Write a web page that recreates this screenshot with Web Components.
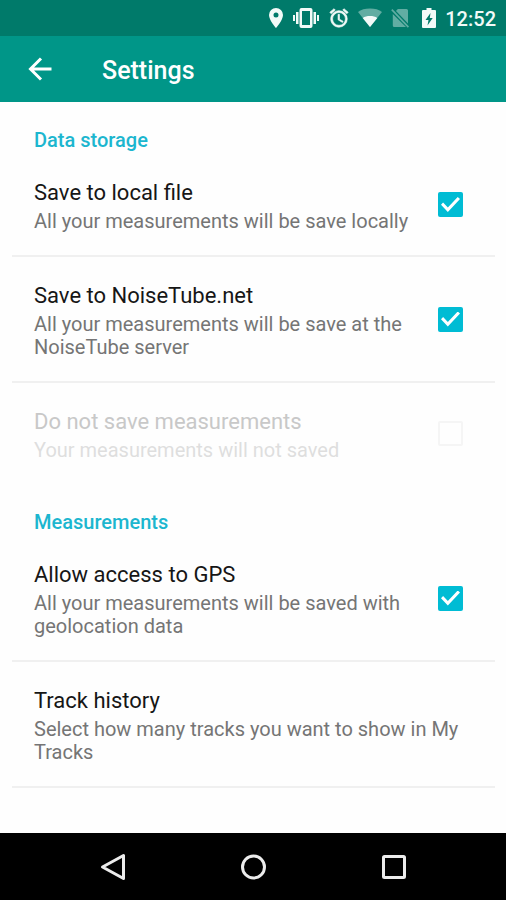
<!DOCTYPE html>
<html lang="en">
<head>
<meta charset="utf-8">
<meta name="viewport" content="width=device-width, initial-scale=1">
<title>Settings</title>
<style>
  body { margin: 0; background: #fefefe; font-family: Roboto, "Liberation Sans", sans-serif; }
</style>
</head>
<body>
<settings-app></settings-app>

<template id="status-bar">
  <style>
    :host { display: flex; align-items: center; justify-content: flex-end; height: 36px; padding-right: 10px; background: #007a6a; color: #f2faf8; }
    .icons { display: flex; align-items: center; gap: 8px; margin-right: 5px; }
    svg { display: block; fill: currentColor; }
    time { font-size: 20px; line-height: 24px; font-weight: 500; padding-top: 2px; }
  </style>
  <div class="icons">
    <svg width="16" height="22" viewBox="0 0 16 22" role="img" aria-label="Location"><path fill-rule="evenodd" d="M8 1a7 7 0 0 0-7 7c0 5.200 7 13 7 13s7-7.800 7-13a7 7 0 0 0-7-7zm0 4.600a2.500 2.500 0 1 1 0 5 2.500 2.500 0 0 1 0-5z"/></svg>
    <svg width="28" height="22" viewBox="0 0 28 22" role="img" aria-label="Vibrate"><path fill-rule="evenodd" d="M9.500 1h9a2 2 0 0 1 2 2v16a2 2 0 0 1-2 2h-9a2 2 0 0 1-2-2V3a2 2 0 0 1 2-2zm.5 3v14h8V4zM4 5h2.500v12H4zM1 8h2v6H1zM21.500 5H24v12h-2.500zM25 8h2v6h-2z"/></svg>
    <svg width="22" height="22" viewBox="0 0 24 24" role="img" aria-label="Alarm"><path d="M22 5.720l-4.600-3.860-1.290 1.530 4.600 3.860L22 5.720zM7.880 3.390L6.600 1.860 2 5.710l1.290 1.530 4.590-3.850zM12.500 8H11v6l4.750 2.850.75-1.230-4-2.370V8zM12 4c-4.970 0-9 4.030-9 9s4.020 9 9 9a9 9 0 0 0 0-18zm0 16a7 7 0 1 1 0-14 7 7 0 0 1 0 14z" stroke="currentColor" stroke-width=".7"/></svg>
    <svg width="24" height="22" viewBox="0 0 24 22" role="img" aria-label="Wi-Fi"><path opacity=".4" d="M12 20L0 5C3 2.500 7 1.500 12 1.500S21 2.500 24 5z"/><path d="M12 20L4.700 10.900C6.700 9.600 9.200 9 12 9s5.300.6 7.300 1.900z"/></svg>
    <svg width="20" height="22" viewBox="0 0 20 22" role="img" aria-label="No SIM"><g opacity=".4"><path d="M7.800 2H16.500q1.500 0 1.500 1.500v13L6 4z"/><path d="M2.800 7L16 20H4.300q-1.500 0-1.500-1.500z"/><path d="M1.200 3.200l1.200-1.200L19 19.500l-1.200 1.200z"/></g></svg>
    <svg width="22" height="22" viewBox="0 0 22 22" role="img" aria-label="Battery charging"><path fill-rule="evenodd" d="M8.500 1h5v2H17q1 0 1 1v16q0 1-1 1H5q-1 0-1-1V4q0-1 1-1h3.500zM12.500 6L7.500 13H10.500L9.500 18.500 14.700 11H11.800z"/></svg>
  </div>
  <time datetime="12:52">12:52</time>
</template>

<template id="app-bar">
  <style>
    :host { display: flex; align-items: center; gap: 47px; height: 66px; padding-left: 25px; background: #009688; color: #fff; }
    button { display: block; width: 30px; height: 30px; padding: 0; border: 0; background: none; color: inherit; }
    svg { display: block; }
    h1 { margin: 0; font-size: 25px; line-height: 30px; font-weight: 500; padding-top: 4px; }
  </style>
  <button type="button" aria-label="Back"><svg width="30" height="30" viewBox="0 0 30 30" fill="none" stroke="currentColor" stroke-width="3"><path d="M26.500 15H6M16 4.500L5.500 15 16 25.500"/></svg></button>
  <h1><slot></slot></h1>
</template>

<template id="settings-section">
  <style>
    :host { display: block; }
    h2 { margin: 0; padding: 26px 22px 2px; font-size: 20px; line-height: 24px; font-weight: 500; color: #1cb6cf; }
  </style>
  <h2><slot name="heading"></slot></h2>
  <slot></slot>
</template>

<template id="setting-item">
  <style>
    :host { display: block; border-bottom: 2px solid #f0f0f0; }
    :host([plain]) { border-bottom: 0; }
    .row { box-sizing: border-box; display: flex; align-items: center; gap: 20px; width: 100%; padding: 22px 32px 22px 22px; margin: 0; border: 0; background: none; font: inherit; text-align: left; }
    .text { flex: 1; min-width: 0; display: flex; flex-direction: column; gap: 2px; padding-top: 2px; }
    .title { font-size: 22px; line-height: 30px; color: #161616; }
    .summary { font-size: 20px; line-height: 23px; color: #757575; }
    input { appearance: none; flex: none; display: grid; place-items: center; box-sizing: border-box; width: 25px; height: 25px; margin: 0; border: 2px solid #757575; border-radius: 2px; }
    input:checked { border: 0; background: #00bcd4; }
    input:checked::before { content: ""; width: 19px; height: 15px; background: #fff; clip-path: polygon(0 51%, 11% 37%, 36% 70%, 88% 0, 100% 13%, 36% 100%); }
    :host([disabled]) .title { color: #c8c8c8; }
    :host([disabled]) .summary { color: #dedede; }
    input:disabled { border-color: #f5f5f5; }
  </style>
</template>

<template id="nav-bar">
  <style>
    :host { display: grid; grid-template-columns: repeat(3, 1fr); height: 67px; padding: 0 43px; background: #000; color: #ececec; }
    button { display: grid; place-items: center; padding: 0; border: 0; background: none; color: inherit; }
    svg { display: block; fill: none; stroke: currentColor; stroke-width: 3; stroke-linejoin: round; }
  </style>
  <button type="button" aria-label="Back"><svg width="28" height="28" viewBox="0 0 28 28"><path d="M24.500 2.500v23L3.500 14z"/></svg></button>
  <button type="button" aria-label="Home"><svg width="28" height="28" viewBox="0 0 28 28"><circle cx="14.500" cy="14" r="11"/></svg></button>
  <button type="button" aria-label="Overview"><svg width="28" height="28" viewBox="0 0 28 28"><rect x="4.500" y="3.500" width="21" height="21" rx="1"/></svg></button>
</template>

<template id="settings-app">
  <style>
    :host { display: flex; flex-direction: column; min-height: 100vh; }
    main { flex: 1; padding: 0 11px 0 12px; }
  </style>
  <status-bar></status-bar>
  <app-bar>Settings</app-bar>
  <main>
    <settings-section>
      <span slot="heading">Data storage</span>
      <setting-item type="checkbox" checked><span slot="title">Save to local file</span><span slot="summary">All your measurements will be save locally</span></setting-item>
      <setting-item type="checkbox" checked><span slot="title">Save to NoiseTube.net</span><span slot="summary">All your measurements will be save at the NoiseTube server</span></setting-item>
      <setting-item type="checkbox" disabled plain><span slot="title">Do not save measurements</span><span slot="summary">Your measurements will not saved</span></setting-item>
    </settings-section>
    <settings-section>
      <span slot="heading">Measurements</span>
      <setting-item type="checkbox" checked><span slot="title">Allow access to GPS</span><span slot="summary">All your measurements will be saved with geolocation data</span></setting-item>
      <setting-item><span slot="title">Track history</span><span slot="summary">Select how many tracks you want to show in My Tracks</span></setting-item>
    </settings-section>
  </main>
  <nav-bar></nav-bar>
</template>

<script>
  class TemplateElement extends HTMLElement {
    constructor() {
      super();
      const template = document.getElementById(this.localName);
      this.attachShadow({ mode: "open" }).append(template.content.cloneNode(true));
    }
  }

  // A row is a labelled checkbox, or a button when it opens a further choice.
  class SettingItem extends HTMLElement {
    connectedCallback() {
      if (this.shadowRoot) return;
      const root = this.attachShadow({ mode: "open" });
      root.append(document.getElementById("setting-item").content.cloneNode(true));
      const isCheckbox = this.getAttribute("type") === "checkbox";
      const row = document.createElement(isCheckbox ? "label" : "button");
      row.className = "row";
      row.innerHTML = '<span class="text"><span class="title"><slot name="title"></slot></span><span class="summary"><slot name="summary"></slot></span></span>';
      if (isCheckbox) {
        const input = document.createElement("input");
        input.type = "checkbox";
        input.id = "toggle";
        input.checked = this.hasAttribute("checked");
        input.disabled = this.hasAttribute("disabled");
        row.htmlFor = "toggle";
        row.append(input);
      } else {
        row.type = "button";
      }
      root.append(row);
    }
  }

  customElements.define("status-bar", class extends TemplateElement {});
  customElements.define("app-bar", class extends TemplateElement {});
  customElements.define("settings-section", class extends TemplateElement {});
  customElements.define("setting-item", SettingItem);
  customElements.define("nav-bar", class extends TemplateElement {});
  customElements.define("settings-app", class extends TemplateElement {});
</script>
</body>
</html>
